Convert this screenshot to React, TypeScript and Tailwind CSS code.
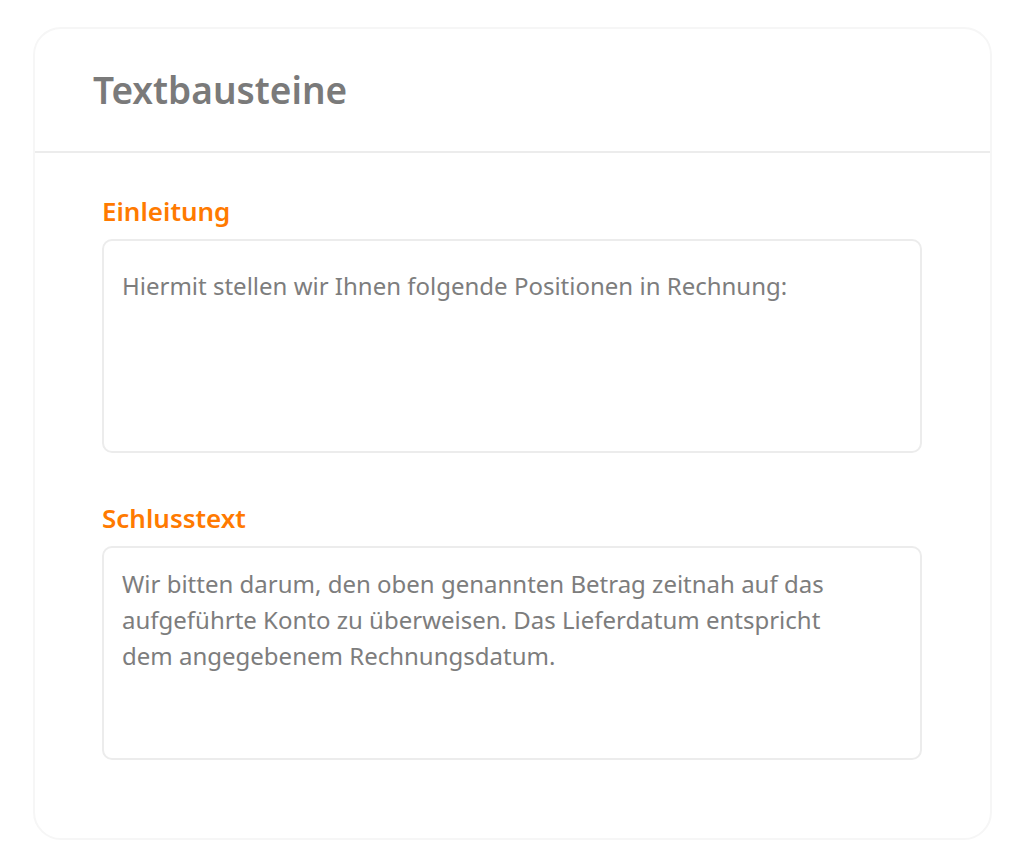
const blocks = [
  {
    label: 'Einleitung',
    text: 'Hiermit stellen wir Ihnen folgende Positionen in Rechnung:',
    pad: 'pt-[27px]',
  },
  {
    label: 'Schlusstext',
    text: 'Wir bitten darum, den oben genannten Betrag zeitnah auf das aufgeführte Konto zu überweisen. Das Lieferdatum entspricht dem angegebenem Rechnungsdatum.',
    pad: 'pt-[18px]',
  },
]

export default function App() {
  return (
    <div className="min-h-screen bg-white pt-[27px] pl-[33px] pr-[32px] font-['Noto_Sans',sans-serif]">
      <div className="h-[813px] rounded-[28px] border-2 border-[#f6f6f6] bg-white">
        {/* Header */}
        <div className="flex h-[124px] items-center border-b-2 border-[#ececec] pl-[58px]">
          <h1 className="text-[37px] font-semibold text-[#7a7a7a]">Textbausteine</h1>
        </div>

        {/* Text blocks */}
        <div className="flex flex-col gap-[45px] pt-[38px] pl-[67px] pr-[68px]">
          {blocks.map((b) => (
            <div key={b.label}>
              <label className="block text-[26px] font-semibold leading-[40px] text-[#ff7a00]">
                {b.label}
              </label>
              <textarea
                defaultValue={b.text}
                className={`mt-[8px] block h-[214px] w-full resize-none rounded-[10px] border-2 border-[#ececec] pl-[18px] pr-[60px] ${b.pad} text-[24px] leading-[36px] text-[#7d7d7d] outline-none`}
              />
            </div>
          ))}
        </div>
      </div>
    </div>
  )
}
